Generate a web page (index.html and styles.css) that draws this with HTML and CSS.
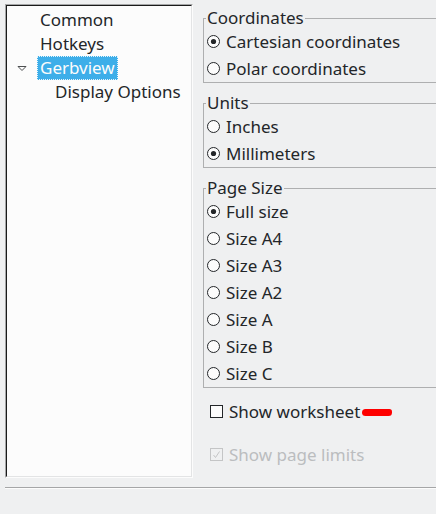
FILE: index.html
```html
<!DOCTYPE html>
<html>
<head>
<meta charset="utf-8">
<link rel="stylesheet" href="styles.css">
</head>
<body>
<div class="dialog">
  <div class="main">
    <div class="tree-frame">
      <div class="tree">
        <div class="tree-row"><span class="tree-label">Common</span></div>
        <div class="tree-row"><span class="tree-label">Hotkeys</span></div>
        <div class="tree-row">
          <svg class="expander" width="10" height="7" viewBox="0 0 10 7"><path d="M1 1.5 H9 L5 5.5 Z" fill="none" stroke="#4d4f51" stroke-width="1" stroke-linejoin="miter"/></svg>
          <span class="tree-label selected">Gerbview</span>
        </div>
        <div class="tree-row child"><span class="tree-label">Display Options</span></div>
      </div>
    </div>
    <div class="options">
      <fieldset class="group">
        <legend>Coordinates</legend>
        <div class="radio-row"><svg class="radio" width="13" height="13" viewBox="0 0 13 13"><circle cx="6.5" cy="6.5" r="6" fill="#fcfcfc" stroke="#232629"/><circle cx="6.5" cy="6.5" r="2.6" fill="#232629"/></svg><span>Cartesian coordinates</span></div>
        <div class="radio-row"><svg class="radio" width="13" height="13" viewBox="0 0 13 13"><circle cx="6.5" cy="6.5" r="6" fill="#fcfcfc" stroke="#232629"/></svg><span>Polar coordinates</span></div>
      </fieldset>
      <fieldset class="group">
        <legend>Units</legend>
        <div class="radio-row"><svg class="radio" width="13" height="13" viewBox="0 0 13 13"><circle cx="6.5" cy="6.5" r="6" fill="#fcfcfc" stroke="#232629"/></svg><span>Inches</span></div>
        <div class="radio-row"><svg class="radio" width="13" height="13" viewBox="0 0 13 13"><circle cx="6.5" cy="6.5" r="6" fill="#fcfcfc" stroke="#232629"/><circle cx="6.5" cy="6.5" r="2.6" fill="#232629"/></svg><span>Millimeters</span></div>
      </fieldset>
      <fieldset class="group last">
        <legend>Page Size</legend>
        <div class="radio-row"><svg class="radio" width="13" height="13" viewBox="0 0 13 13"><circle cx="6.5" cy="6.5" r="6" fill="#fcfcfc" stroke="#232629"/><circle cx="6.5" cy="6.5" r="2.6" fill="#232629"/></svg><span>Full size</span></div>
        <div class="radio-row"><svg class="radio" width="13" height="13" viewBox="0 0 13 13"><circle cx="6.5" cy="6.5" r="6" fill="#fcfcfc" stroke="#232629"/></svg><span>Size A4</span></div>
        <div class="radio-row"><svg class="radio" width="13" height="13" viewBox="0 0 13 13"><circle cx="6.5" cy="6.5" r="6" fill="#fcfcfc" stroke="#232629"/></svg><span>Size A3</span></div>
        <div class="radio-row"><svg class="radio" width="13" height="13" viewBox="0 0 13 13"><circle cx="6.5" cy="6.5" r="6" fill="#fcfcfc" stroke="#232629"/></svg><span>Size A2</span></div>
        <div class="radio-row"><svg class="radio" width="13" height="13" viewBox="0 0 13 13"><circle cx="6.5" cy="6.5" r="6" fill="#fcfcfc" stroke="#232629"/></svg><span>Size A</span></div>
        <div class="radio-row"><svg class="radio" width="13" height="13" viewBox="0 0 13 13"><circle cx="6.5" cy="6.5" r="6" fill="#fcfcfc" stroke="#232629"/></svg><span>Size B</span></div>
        <div class="radio-row"><svg class="radio" width="13" height="13" viewBox="0 0 13 13"><circle cx="6.5" cy="6.5" r="6" fill="#fcfcfc" stroke="#232629"/></svg><span>Size C</span></div>
      </fieldset>
      <div class="checks">
        <div class="check-row"><span class="checkbox"></span><span>Show worksheet</span><span class="scribble"></span></div>
        <div class="check-row disabled"><svg class="checkbox-svg" width="13" height="13" viewBox="0 0 13 13"><rect x="0.5" y="0.5" width="12" height="12" fill="none" stroke="#c4c5c6"/><path d="M3.5 7 L5.5 9.5 L9.5 3.5" fill="none" stroke="#c4c5c6" stroke-width="1"/></svg><span>Show page limits</span></div>
      </div>
    </div>
  </div>
  <div class="separator"></div>
</div>
</body>
</html>
```

FILE: styles.css
```css
html, body {
  margin: 0;
  padding: 0;
  background: #eff0f1;
  overflow: hidden;
}
body {
  width: 436px;
  height: 514px;
  font-family: "Noto Sans", "DejaVu Sans", sans-serif;
  font-size: 17px;
  color: #232629;
}
.dialog {
  display: flex;
  flex-direction: column;
}
.main {
  display: flex;
  padding: 4px 0 0 5px;
}
.tree-frame {
  width: 186px;
  height: 472px;
  border-top: 1px solid #a5a6a7;
  border-left: 1px solid #a5a6a7;
  border-right: 1px solid #fcfcfc;
  border-bottom: 1px solid #fcfcfc;
  flex: none;
}
.tree {
  background: #fcfcfc;
  border-top: 1px solid #1a1a1a;
  border-left: 1px solid #1a1a1a;
  border-right: 1px solid #e3e4e5;
  border-bottom: 1px solid #e3e4e5;
  padding-top: 2px;
  box-sizing: border-box;
  height: 472px;
}
.tree-row {
  display: flex;
  align-items: center;
  height: 24px;
  padding-left: 30px;
  position: relative;
  line-height: 24px;
}
.tree-row.child {
  padding-left: 45px;
}
.tree-label {
  padding: 0 3px;
  white-space: nowrap;
}
.tree-label.selected {
  background: #3daee9;
  color: #fcfcfc;
  outline: 1px dotted #e6f4fc;
  outline-offset: -1px;
  height: 24px;
}
.expander {
  position: absolute;
  left: 10px;
  top: 9px;
}
.options {
  flex: 1;
  margin-left: 10px;
  margin-right: -12px;
  padding-top: 4px;
}
.group {
  margin: 0 0 10px 0;
  padding: 0 0 0 3px;
  border: 1px solid #aeafb0;
  min-width: 0;
}
.group.last {
  margin-bottom: 0;
}
.group legend {
  padding: 0 1px;
  margin-left: -1px;
  line-height: 20px;
}
.radio-row {
  display: flex;
  align-items: center;
  height: 27px;
  white-space: nowrap;
}
.radio {
  flex: none;
  margin-right: 6px;
}
.checks {
  display: flex;
  flex-direction: column;
  gap: 17px;
  padding: 10px 0 0 7px;
}
.check-row {
  display: flex;
  align-items: center;
  height: 26px;
  white-space: nowrap;
}
.checkbox {
  width: 11px;
  height: 11px;
  border: 1px solid #232629;
  background: #fcfcfc;
  margin-right: 6px;
  flex: none;
}
.checkbox-svg {
  flex: none;
  margin-right: 6px;
}
.check-row.disabled {
  color: #bbbdbf;
}
.scribble {
  display: inline-block;
  width: 30px;
  height: 7px;
  background: #fe0000;
  border-radius: 4px 3px 4px 4px;
  margin-left: 2px;
  margin-top: 2px;
}
.separator {
  margin: 9px 0 0 5px;
  height: 1px;
  background: #a5a6a7;
  border-bottom: 1px solid #fcfcfc;
}
```
